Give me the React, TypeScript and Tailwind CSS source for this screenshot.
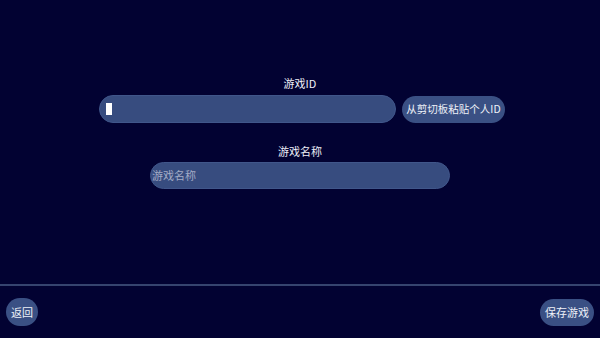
import type { ReactNode } from "react";

const FONT = { fontFamily: '"Noto Sans CJK SC", "Noto Sans", sans-serif' };

function PillButton({ children, className = "" }: { children: ReactNode; className?: string }) {
  return (
    <button
      type="button"
      className={`flex items-center justify-center rounded-full bg-[#3a5084] leading-none text-[#eef0f8] ${className}`}
    >
      {children}
    </button>
  );
}

export default function App() {
  return (
    <div className="flex h-[338px] w-[600px] flex-col bg-[#020232]" style={FONT}>
      <main className="flex flex-1 flex-col items-center pt-[76px]">
        <p className="text-[11px] leading-[14px] text-[#eef0f8]">游戏ID</p>
        <div className="mt-[5px] flex gap-[6px] pl-[4px]">
          <div className="flex h-[28px] w-[297px] items-center rounded-full border border-[#40568a] bg-[#374c7f] pl-[6px]">
            <span className="block h-[12px] w-[6px] bg-white" />
          </div>
          <PillButton className="h-[27px] w-[103px] self-center text-[10.5px]">从剪切板粘贴个人ID</PillButton>
        </div>

        <p className="mt-[21px] text-[11px] leading-[14px] text-[#eef0f8]">游戏名称</p>
        <div className="mt-[4px] flex h-[27px] w-[300px] items-center rounded-full border border-[#40568a] bg-[#374c7f] pl-[1px]">
          <span className="text-[11px] leading-none text-[#a3abc6]">游戏名称</span>
        </div>
      </main>

      <div className="h-[2px] bg-[#36446f]" />

      <footer className="flex h-[52px] items-center justify-between px-[6px]">
        <PillButton className="h-[28px] w-[32px] text-[11px]">返回</PillButton>
        <PillButton className="h-[27px] w-[54px] text-[11px]">保存游戏</PillButton>
      </footer>
    </div>
  );
}
